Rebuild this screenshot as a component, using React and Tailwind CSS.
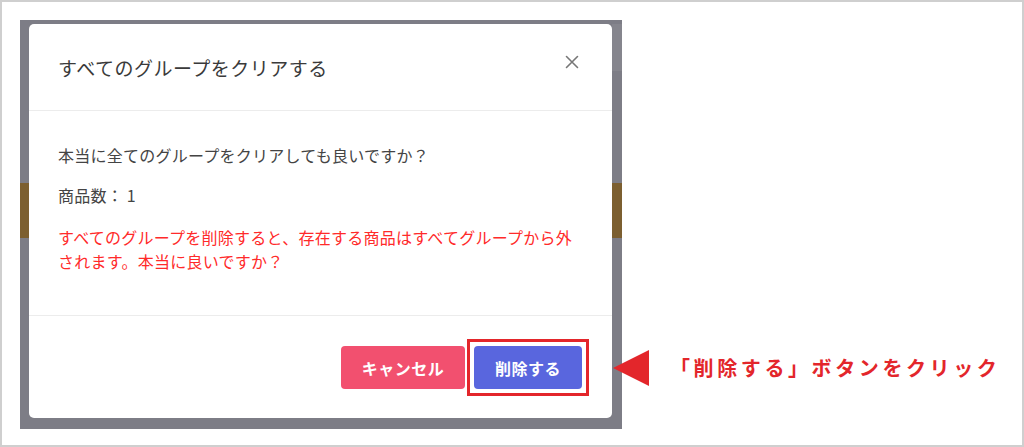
import React from 'react'

const jp = { fontFamily: '"Noto Sans CJK JP", "Noto Sans", sans-serif' }

function CloseIcon() {
  return (
    <svg width="14" height="14" viewBox="0 0 14 14" fill="none">
      <path d="M1.5 1.5 L12.5 12.5 M12.5 1.5 L1.5 12.5" stroke="#777" strokeWidth="1.6" strokeLinecap="round" />
    </svg>
  )
}

function Modal() {
  return (
    <div className="relative z-10 flex h-[394px] w-[583px] flex-col rounded-[5px] bg-white">
      {/* header */}
      <div className="flex h-[87px] shrink-0 items-center justify-between border-b border-[#ececec] pl-[29px] pr-[33px]">
        <h2 className="text-[19px] leading-none tracking-[0.5px] text-[#3a3a3a]">すべてのグループをクリアする</h2>
        <button className="mb-[11px]">
          <CloseIcon />
        </button>
      </div>

      {/* body */}
      <div className="shrink-0 border-b border-[#ececec] pb-[42px] pl-[29px] pr-[20px] pt-[32px] text-[16px] leading-6 tracking-[0.25px]">
        <p className="mb-4 text-[#444]">本当に全てのグループをクリアしても良いですか？</p>
        <p className="mb-[18px] text-[#444]">商品数： 1</p>
        <p className="text-[#ff2a2a]">
          すべてのグループを削除すると、存在する商品はすべてグループから外
          <br />
          されます。本当に良いですか？
        </p>
      </div>

      {/* footer */}
      <div className="flex flex-1 items-start justify-end gap-[9px] pr-[30px] pt-[30px]">
        <button className="h-[43px] w-[124px] rounded-[4px] bg-[#f2506f] text-[16px] font-bold tracking-[0.5px] text-white">
          キャンセル
        </button>
        <div className="relative">
          <button className="h-[43px] w-[108px] rounded-[4px] bg-[#5966de] text-[16px] font-bold tracking-[0.5px] text-white">
            削除する
          </button>
          <div className="pointer-events-none absolute -inset-[7px] border-[3px] border-[#e3262b]" />
        </div>
      </div>
    </div>
  )
}

export default function App() {
  return (
    <div style={jp} className="relative h-[447px] w-[1024px] overflow-hidden border-2 border-[#cfcfcf] bg-white">
      <div className="ml-[18px] mt-[18px] w-[602px]">
        {/* dimmed page behind the dialog */}
        <div className="relative h-[409px] bg-[#7d7d86] pb-[11px] pl-[9px] pr-[10px] pt-[4px]">
          <div className="absolute right-0 top-[4px] h-[47px] w-[10px] bg-[#85858d]" />
          <div className="absolute left-0 right-0 top-[163px] h-[55px] bg-[#7c5f30]" />
          <Modal />
        </div>
      </div>

      {/* callout */}
      <div className="absolute left-[610px] top-[347px] flex items-center">
        <svg width="38" height="38" viewBox="0 0 38 38">
          <polygon points="1,19 37,1 37,37" fill="#e3262b" />
        </svg>
        <span className="ml-[20px] text-[20px] font-bold tracking-[3.6px] text-[#e3262b]">
          「削除する」ボタンをクリック
        </span>
      </div>
    </div>
  )
}
